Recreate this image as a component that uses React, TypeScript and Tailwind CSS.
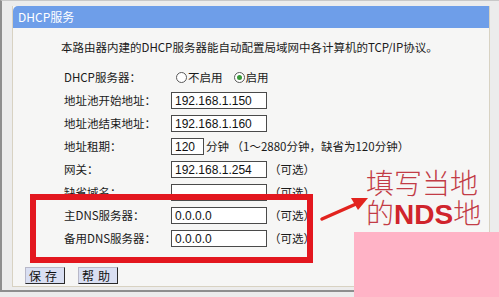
const CJK = "font-['Noto_Sans_CJK_SC','Noto_Sans',sans-serif]";
const MONO = "font-['Liberation_Sans',Arial,sans-serif]";

type Row = {
  label: string;
  value?: string;
  width?: string;
  after?: string;
};

const rows: Row[] = [
  { label: "地址池开始地址：", value: "192.168.1.150" },
  { label: "地址池结束地址：", value: "192.168.1.160" },
  { label: "地址租期：", value: "120", width: "w-[33px]", after: "分钟 （1～2880分钟，缺省为120分钟）" },
  { label: "网关：", value: "192.168.1.254", after: "（可选）" },
  { label: "缺省域名：", value: "", after: "（可选）" },
  { label: "主DNS服务器：", value: "0.0.0.0", after: "（可选）" },
  { label: "备用DNS服务器：", value: "0.0.0.0", after: "（可选）" },
];

function Radio({ checked }: { checked?: boolean }) {
  return (
    <span className="flex h-[11px] w-[11px] items-center justify-center rounded-full border border-[#5a5a5a] bg-white">
      {checked && <span className="h-[5px] w-[5px] rounded-full bg-[#3a9a3a]" />}
    </span>
  );
}

function Field({ value, width }: { value: string; width?: string }) {
  return (
    <div
      className={`flex h-[17px] items-center border border-[#4a4a4a] bg-white pl-[3px] text-[12px] text-[#111] ${MONO} ${width ?? "w-[96px]"}`}
    >
      {value}
    </div>
  );
}

function Button({ label }: { label: string }) {
  return (
    <div className="flex h-[17px] w-[40px] items-center justify-center border border-t-[#b8b8c8] border-l-[#b8b8c8] border-b-[#2a2a2a] border-r-[#2a2a2a] bg-[#d9dff2] text-[12px] tracking-[4px] text-[#111]">
      {label}
    </div>
  );
}

export default function App() {
  return (
    <div className={`relative h-[297px] w-[499px] overflow-hidden bg-[#ececec] ${CJK}`}>
      <div className="flex h-[292px] w-[499px] border-b-2 border-l-2 border-t border-[#8e8e8e] border-t-[#c8c8c8]">
        {/* panel */}
        <div className="ml-[10px] mt-[5px] flex h-[281px] w-[478px] flex-col border-b border-r border-l border-[#d8d2c2] bg-[#f6f6f5]">
          <div className="flex h-[22px] items-center rounded-tl-[5px] bg-[#6e9ee9] pl-[5px] text-[12px] text-white">
            DHCP服务
          </div>

          <div className="pl-[48px] pt-[12px] text-[11.5px] leading-[14px] text-[#1a1a1a]">
            本路由器内建的DHCP服务器能自动配置局域网中各计算机的TCP/IP协议。
          </div>

          <div className="mt-[12px] flex flex-col pl-[51px] text-[11.5px] text-[#1a1a1a]">
            <div className="flex h-[23px] items-center">
              <span className="w-[112px]">DHCP服务器：</span>
              <Radio />
              <span className="ml-[1px]">不启用</span>
              <span className="ml-[11px]">
                <Radio checked />
              </span>
              <span className="ml-[1px]">启用</span>
            </div>
            {rows.map((r) => (
              <div key={r.label} className="flex h-[23px] items-center">
                <span className="w-[107px]">{r.label}</span>
                <Field value={r.value ?? ""} width={r.width} />
                {r.after && <span className="ml-[2px] whitespace-nowrap">{r.after}</span>}
              </div>
            ))}
          </div>

          <div className="mt-[17px] flex gap-[13px] pl-[12px]">
            <Button label="保存" />
            <Button label="帮助" />
          </div>
        </div>
      </div>

      {/* red highlight box */}
      <div className="absolute left-[30px] top-[194px] h-[69px] w-[283px] border-[6px] border-[#e3171f]" />

      {/* annotation arrow */}
      <svg className="absolute left-[318px] top-[192px]" width="54" height="32" viewBox="0 0 54 32">
        <path d="M4 27 L38 12" stroke="#e2231e" strokeWidth="3.5" strokeLinecap="round" />
        <path d="M50 6 L33 6 L40 18 Z" fill="#e2231e" />
      </svg>

      <div className="absolute left-[366px] top-[167px] text-[28px] font-light leading-[30px] text-[#c23c46]">
        <div>填写当地</div>
        <div>
          的<span className="font-['Liberation_Sans',sans-serif] font-bold text-[#d0242c]">NDS</span>地
        </div>
      </div>

      {/* pink patch */}
      <div className="absolute left-[354px] top-[232px] h-[65px] w-[145px] bg-[#ffb3c6]" />
    </div>
  );
}
